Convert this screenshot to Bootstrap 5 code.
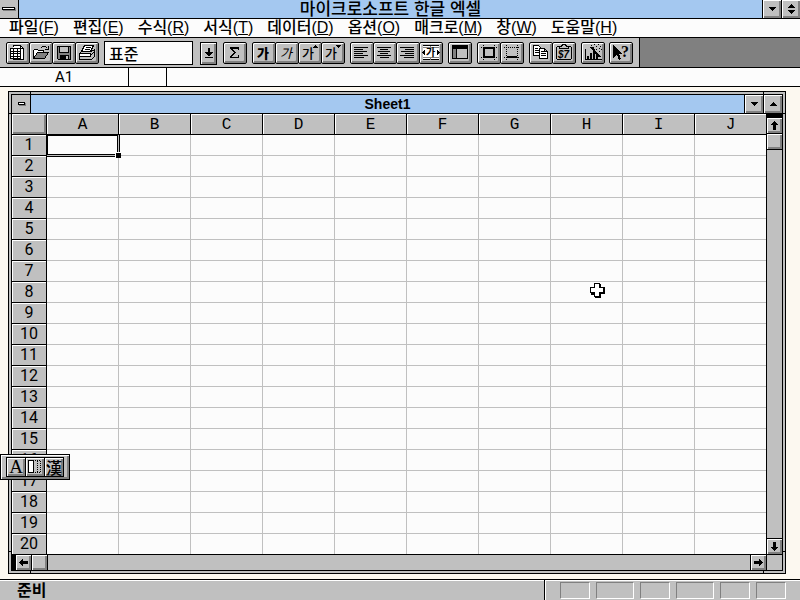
<!DOCTYPE html>
<html lang="ko">
<head>
<meta charset="utf-8">
<meta name="viewport" content="width=device-width, initial-scale=1">
<title>마이크로소프트 한글 엑셀</title>
<link href="https://cdn.jsdelivr.net/npm/bootstrap@5.3.0/dist/css/bootstrap.min.css" rel="stylesheet">
<style>
:root { --face:#c0c0c0; --shade:#808080; --caption:#a4c8f0; --paper:#fcfcfc; }
body { font-family:"Liberation Sans","Noto Sans CJK KR",sans-serif; font-size:16px; line-height:18px; color:#000; background:#fcf8f0; }
svg { display:block; shape-rendering:crispEdges; }
.face { background:var(--face); }
.bg-tray { background:var(--shade); }
.box-content { box-sizing:content-box; }
.raised { background:var(--face); border:0; padding:0; border-radius:0; color:#000; display:flex; align-items:center; justify-content:center; flex:none; box-shadow:inset 1px 1px #fff, inset -2px -2px var(--shade); }
.line-b { border-bottom:1px solid #000; }
.line-r { border-right:1px solid #000; }
.line-l { border-left:1px solid #000; }
.line-t { border-top:1px solid #000; }
.caption-bar { background:var(--caption); height:19px; }
.caption-text { font-size:17px; font-weight:500; line-height:20px; }
.sysbox { width:19px; height:18px; }
.menu-bar { background:var(--paper); height:19px; padding-left:9px; gap:14px; }
.menu-bar a { color:#000; text-decoration:none; font-weight:500; }
.tool-bar { height:30px; }
.tools { padding:4px 6px 0; gap:5px; }
.tool-btn { width:24px; height:22px; border:1px solid #000; border-radius:2px; }
.tool-btn + .tool-btn { margin-left:-1px; }
.style-box { width:89px; height:24px; margin-top:-1px; border:1px solid #000; background:var(--paper); padding:0 4px; font-weight:500; }
.style-arrow { width:17px; height:23px; border:1px solid #000; margin:0 1px 0 2px; }
.formula-bar { height:19px; background:var(--paper); }
.formula-bar input { border:0; background:transparent; padding:0; min-width:0; font-family:Roboto,sans-serif; font-size:15px; }
.name-box { width:128px; text-align:center; }
.gap-box { width:39px; }
.desk { padding:4px 14px 5px 8px; min-height:0; }
.doc-window { border:1px solid #000; padding:2px; background:var(--face); min-height:0; }
.doc-window::before, .doc-window::after { content:""; position:absolute; border:0 solid #000; }
.doc-window::before { top:0; bottom:0; left:21px; right:21px; border-width:0 1px; }
.doc-window::after { left:0; right:0; top:21px; bottom:21px; border-width:1px 0; }
.doc-inner { border:1px solid #000; z-index:1; background:var(--face); min-height:0; }
.doc-title { font-size:14px; font-weight:700; }
.doc-btn { width:19px; height:18px; }
.sheet-area { min-height:0; }
.grid-view { background:var(--paper); overflow:hidden; min-width:0; }
.cells { table-layout:fixed; width:calc(100% + 1px); border-collapse:separate; border-spacing:0; }
.cells th, .cells td { height:21px; padding:0; border:solid var(--face); border-width:0 1px 1px 0; }
.cells th { background:var(--face); border-color:#000; text-align:center; font-weight:400; font-family:Roboto,sans-serif; font-size:16px; line-height:20px; box-shadow:inset 1px 1px #fff; }
.cells thead th { font-family:"Liberation Mono",monospace; padding-top:2px; line-height:18px; }
.cells .row-head { width:35px; }
.cells .corner { box-shadow:inset 1px 1px #fff, inset -2px -2px var(--shade); }
.cursor-frame { position:absolute; top:-1px; left:-1px; right:-2px; bottom:-2px; border:2px solid #000; border-right:3px double #000; border-bottom:3px double #000; }
.cursor-frame::after { content:""; position:absolute; right:-4px; bottom:-4px; width:5px; height:5px; background:#000; box-shadow:-1px -1px #fff; }
.vscroll { width:16px; }
.vscroll .stop { height:4px; background:#000; }
.vscroll .raised { width:15px; height:15px; }
.hscroll { height:16px; }
.hscroll .stop { width:4px; background:#000; }
.hscroll .raised { width:15px; height:15px; }
.hscroll .size-box { width:16px; }
.status-bar { height:21px; }
.status-text { box-shadow:inset 0 1px #fff; padding-left:17px; font-weight:700; line-height:21px; }
.lamps { gap:6px; padding:2px 14px 1px 15px; box-shadow:inset 1px 1px #fff; }
.lamp { width:30px; height:17px; border:1px solid #fff; border-top-color:var(--shade); border-left-color:var(--shade); }
.lamp.wide { width:38px; }
.ime { top:454px; left:0; z-index:5; border:1px solid #000; padding:2px 5px; box-shadow:inset 1px 1px #fff, inset -2px -2px var(--shade); }
.ime-btn { width:20px; height:20px; border:1px solid #000; margin-left:-1px; font-family:"Liberation Serif",serif; font-size:19px; line-height:18px; }
.ime-btn:first-child { margin-left:0; }
.ime-btn.hanja { font-family:"Noto Sans CJK KR",sans-serif; font-size:16px; font-weight:500; }
.pointer { top:283px; left:590px; z-index:4; }
.ln { fill:none; stroke:#000; }
.ko { font-family:"Noto Sans CJK KR",sans-serif; font-size:13px; }
.ko.tiny { font-size:10px; }
</style>
</head>
<body class="vh-100 overflow-hidden d-flex flex-column">

<header class="caption-bar line-b d-flex">
  <button class="raised sysbox line-r shadow-none" aria-label="조절 메뉴"><svg width="18" height="18"><path fill="#808080" d="M3 8h13v3H3z"/><path d="M2 7h13v3H2z"/><path fill="#fff" d="M3 8h11v1H3z"/></svg></button>
  <div class="caption-text flex-grow-1 text-center">마이크로소프트 한글 엑셀</div>
  <button class="raised doc-btn line-l" aria-label="최소화"><svg width="15" height="16"><path d="M4 6h7v1h-1v1H9v1H8v1H7V9H6V8H5V7H4z"/></svg></button>
  <button class="raised doc-btn line-l" aria-label="복원"><svg width="15" height="16"><path d="M7 3h1v1h1v1h1v1h1v1H4V6h1V5h1V4h1zM4 9h7v1h-1v1H9v1H8v1H7v-1H6v-1H5v-1H4z"/></svg></button>
</header>

<nav class="menu-bar line-b d-flex">
  <a href="#">파일(<u>F</u>)</a><a href="#">편집(<u>E</u>)</a><a href="#">수식(<u>R</u>)</a><a href="#">서식(<u>T</u>)</a><a href="#">데이터(<u>D</u>)</a><a href="#">옵션(<u>O</u>)</a><a href="#">매크로(<u>M</u>)</a><a href="#">창(<u>W</u>)</a><a href="#">도움말(<u>H</u>)</a>
</nav>

<div class="tool-bar line-b d-flex">
  <div class="tools face line-r d-flex align-items-start">
    <div class="d-flex">
      <button class="raised tool-btn" aria-label="새 시트"><svg width="22" height="20" viewBox="0 0 22 20"><path fill="#fff" d="M6 2h7l4 4v11H6z"/><path class="ln" d="M6.500 4V2.500H13.500L16.500 5.500V16.500H6M13.500 2.500V5.500H16.500"/><path fill="#fff" d="M3 5h11v11H3z"/><path class="ln" d="M3.500 5.500h10v10h-10zM6.500 5v11M10.500 5v11M3 8.500h11M3 10.500h11M3 13.500h11"/></svg></button>
      <button class="raised tool-btn" aria-label="열기"><svg width="22" height="20" viewBox="0 0 22 20"><path fill="#fff" d="M3 7h4l1 1h6v8H3z"/><path class="ln" d="M3.500 16V7.500L4.500 6.500H7.500L8.500 7.500H13.500V9.500"/><path fill="#808080" stroke="#000" d="M3.500 15.500L7.500 9.500H18.500L14.500 15.500z"/><path class="ln" d="M10.500 5.500L12.500 3.500H15.500L17.500 5.500M18 3v4M15 6.500h3"/></svg></button>
      <button class="raised tool-btn" aria-label="저장"><svg width="22" height="20" viewBox="0 0 22 20"><path fill="#808080" stroke="#000" d="M4.500 3.500h13v13h-12l-1-1z"/><path fill="#c0c0c0" stroke="#000" d="M6.500 3.500h9v6h-9z"/><path d="M7 12h9v5H7z"/><path fill="#c0c0c0" d="M13 13h2v3h-2z"/></svg></button>
      <button class="raised tool-btn" aria-label="인쇄"><svg width="22" height="20" viewBox="0 0 22 20"><path fill="#fff" stroke="#000" d="M8.500 2.500h9L14.500 8.500H5.500z"/><path class="ln" d="M10 4.500h5M9 6.500h5"/><path fill="#c0c0c0" stroke="#000" d="M3.500 10.500L5.500 8.500H15.500L18.500 6.500V13.500L15.500 16.500H3.500z"/><path fill="#fff" stroke="#000" d="M3.500 10.500h11v3h-11z"/><path class="ln" d="M14.500 12.500l4-4"/></svg></button>
    </div>
    <input class="style-box" type="text" value="표준" aria-label="스타일">
    <button class="raised style-arrow" aria-label="스타일 목록"><svg width="15" height="21"><path d="M7 5h2v4h3v1h-1v1h-1v1H9v1H7v-1H6v-1H5v-1H4V9h3zM4 14h8v1H4z"/></svg></button>
    <button class="raised tool-btn" aria-label="자동 합계"><svg width="22" height="20" viewBox="0 0 22 20"><path d="M6 4h9v3h-1V5.500H8.500L12 9.500L8 14h6v-2h1v3H6v-1l4-4.500L6 5z"/></svg></button>
    <div class="d-flex">
      <button class="raised tool-btn" aria-label="굵게"><svg width="22" height="20"><text class="ko" x="4" y="15" font-weight="900">가</text></svg></button>
      <button class="raised tool-btn" aria-label="기울임"><svg width="22" height="20"><text class="ko" x="4" y="15" font-style="italic" font-weight="400">가</text></svg></button>
      <button class="raised tool-btn" aria-label="글꼴 크게"><svg width="22" height="20"><text class="ko" x="3" y="15" font-weight="500">가</text><path d="M16 2h1v1h1v1h1v1h-5V4h1V3h1z"/></svg></button>
      <button class="raised tool-btn" aria-label="글꼴 작게"><svg width="22" height="20"><text class="ko" x="3" y="15" font-weight="500">가</text><path d="M14 2h5v1h-1v1h-1v1h-1V4h-1V3h-1z"/></svg></button>
    </div>
    <div class="d-flex">
      <button class="raised tool-btn" aria-label="왼쪽 맞춤"><svg width="22" height="20"><path class="ln" d="M3 4.500h14M3 6.500h9M3 8.500h13M3 10.500h9M3 12.500h14M3 14.500h10"/></svg></button>
      <button class="raised tool-btn" aria-label="가운데 맞춤"><svg width="22" height="20"><path class="ln" d="M3 4.500h14M6 6.500h8M4 8.500h12M6 10.500h8M3 12.500h14M6 14.500h9"/></svg></button>
      <button class="raised tool-btn" aria-label="오른쪽 맞춤"><svg width="22" height="20"><path class="ln" d="M3 4.500h14M8 6.500h9M4 8.500h13M8 10.500h9M3 12.500h14M7 14.500h10"/></svg></button>
      <button class="raised tool-btn" aria-label="가운데 걸쳐 맞춤"><svg width="22" height="20"><path fill="#fff" d="M3 2h16v15H3z"/><path class="ln" d="M3 2.500h16M3 16.500h16"/><path stroke="#808080" d="M3 4.500h16M3 14.500h16M10.500 3v2M10.500 15v2"/><path d="M2 9h1V8h1V7h1v5H4v-1H3v-1H2zM20 9h-1V8h-1V7h-1v5h1v-1h1v-1h1z"/><text class="ko tiny" x="6" y="13" font-weight="700">가</text></svg></button>
    </div>
    <button class="raised tool-btn" aria-label="자동 서식"><svg width="22" height="20"><path fill="#c0c0c0" stroke="#000" d="M3.500 2.500h15v13h-15z"/><path d="M3 2h16v4H3z"/><path fill="#808080" d="M4 6h3v9H4z"/><path class="ln" d="M7.500 6v10"/></svg></button>
    <div class="d-flex">
      <button class="raised tool-btn" aria-label="윤곽 테두리"><svg width="22" height="20"><path class="ln" stroke-width="2" d="M6 5h10v9H6z"/><path class="ln" stroke-dasharray="1 1" d="M3 4.500h3M16 4.500h4M3 14.500h3M16 14.500h4M5.500 2v3M16.500 2v3M5.500 14v4M16.500 14v4"/></svg></button>
      <button class="raised tool-btn" aria-label="아래쪽 테두리"><svg width="22" height="20"><path class="ln" stroke-dasharray="1 1" d="M3 4.500h16M5.500 2v16M16.500 2v16M3 14.500h16"/><path d="M6 13h10v2H6z"/></svg></button>
    </div>
    <div class="d-flex">
      <button class="raised tool-btn" aria-label="복사"><svg width="22" height="20"><path fill="#fff" stroke="#000" d="M3.500 2.500h5l3 3v7h-8z"/><path class="ln" d="M5 5.500h3M5 7.500h4M5 9.500h4"/><path fill="#fff" stroke="#000" d="M9.500 5.500h5l3 3v7h-8zM14.500 5.500v3h3"/><path class="ln" d="M11 8.500h3M11 10.500h5M11 12.500h5"/></svg></button>
      <button class="raised tool-btn" aria-label="서식 붙여넣기"><svg width="22" height="20"><path class="ln" d="M4.500 3.500h13l1 1v11l-1 1h-13l-1-1v-11z"/><path fill="#c0c0c0" stroke="#000" d="M6.500 5.500v-2h2l1-2h3l1 2h2v2z"/><text x="5" y="15" font-size="10" font-weight="700" font-style="italic">$7</text></svg></button>
    </div>
    <button class="raised tool-btn" aria-label="차트 마법사"><svg width="22" height="20"><path class="ln" d="M3.500 6v10.500h16"/><path d="M5 13h2v4H5zM8 10h2v7H8zM11 8h2v9h-2zM14 12h2v5h-2z"/><path class="ln" stroke-width="2" d="M9 4l9 10"/><path d="M9 2h1v1H9zM12 1h1v1h-1zM14 3h1v1h-1zM16 1h1v1h-1zM18 3h1v1h-1zM17 5h1v1h-1zM19 6h1v1h-1zM14 6h1v1h-1zM17 8h1v1h-1zM11 4h1v1h-1z"/></svg></button>
    <button class="raised tool-btn" aria-label="도움말"><svg width="22" height="20"><path d="M3 2l9 9H9l2 5-2 1-2-5-4 3z"/><text x="11" y="14" font-family="Liberation Serif" font-size="16" font-weight="700">?</text></svg></button>
  </div>
  <div class="flex-grow-1 bg-tray"></div>
</div>

<div class="formula-bar line-b d-flex">
  <input class="name-box" type="text" value="A1" aria-label="이름 상자">
  <div class="gap-box line-l line-r"></div>
  <input class="flex-grow-1" type="text" aria-label="수식 입력">
</div>

<main class="desk flex-grow-1 d-flex">
  <section class="doc-window position-relative flex-grow-1 d-flex flex-column">
    <div class="doc-inner position-relative flex-grow-1 d-flex flex-column">
      <div class="caption-bar line-b d-flex">
        <button class="raised sysbox line-r shadow-none" aria-label="문서 조절 메뉴"><svg width="18" height="18"><path fill="#808080" d="M7 8h7v3H7z"/><path d="M6 7h7v3H6z"/><path fill="#fff" d="M7 8h5v1H7z"/></svg></button>
        <div class="doc-title flex-grow-1 text-center">Sheet1</div>
        <button class="raised doc-btn line-l" aria-label="문서 최소화"><svg width="15" height="16"><path d="M4 6h7v1h-1v1H9v1H8v1H7V9H6V8H5V7H4z"/></svg></button>
        <button class="raised doc-btn line-l" aria-label="문서 최대화"><svg width="15" height="16"><path d="M7 6h1v1h1v1h1v1h1v1H4V9h1V8h1V7h1z"/></svg></button>
      </div>
      <div class="sheet-area flex-grow-1 d-flex">
        <div class="grid-view flex-grow-1">
          <table class="cells">
            <thead><tr id="heads"><th class="row-head corner"></th></tr></thead>
            <tbody id="rows"></tbody>
          </table>
        </div>
        <div class="vscroll face line-l d-flex flex-column">
          <div class="stop"></div>
          <button class="raised line-b box-content" aria-label="위로"><svg width="15" height="15"><path d="M7 3h1v1h1v1h1v1h1v1H9v5H6V7H4V6h1V5h1V4h1z"/></svg></button>
          <div class="raised line-b box-content"></div>
          <div class="flex-grow-1"></div>
          <button class="raised line-t box-content" aria-label="아래로"><svg width="15" height="15"><path d="M6 3h3v5h2v1h-1v1H9v1H8v1H7v-1H6v-1H5V9H4V8h2z"/></svg></button>
        </div>
      </div>
      <div class="hscroll line-t d-flex">
        <div class="stop"></div>
        <button class="raised line-r box-content" aria-label="왼쪽으로"><svg width="15" height="15"><path d="M3 7h1V6h1V5h1V4h1v2h5v3H7v2H6v-1H5V9H4V8H3z"/></svg></button>
        <div class="raised line-r box-content"></div>
        <div class="flex-grow-1"></div>
        <button class="raised line-l box-content" aria-label="오른쪽으로"><svg width="15" height="15"><path d="M12 7h-1V6h-1V5H9V4H8v2H3v3h5v2h1v-1h1V9h1V8h1z"/></svg></button>
        <div class="size-box line-l"></div>
      </div>
    </div>
  </section>
</main>

<footer class="status-bar face line-t d-flex">
  <div class="status-text flex-grow-1 line-r">준비</div>
  <div class="lamps d-flex">
    <div class="lamp"></div><div class="lamp wide"></div><div class="lamp"></div><div class="lamp wide"></div><div class="lamp"></div><div class="lamp"></div>
  </div>
</footer>

<div class="ime face position-absolute d-flex">
  <button class="raised ime-btn">A</button>
  <button class="raised ime-btn" aria-label="전자/반자"><svg width="18" height="18"><path fill="#fff" stroke="#000" d="M2.500 2.500h5v12h-5z"/><path class="ln" stroke-dasharray="1 1" d="M9 2.500h6M9 14.500h6M11.500 3v12M14.500 3v12"/></svg></button>
  <button class="raised ime-btn hanja">漢</button>
</div>
<svg class="pointer position-absolute pe-none" width="16" height="16"><path d="M5 1h6v3h4v7h-4v4H5v-3H1V5h4z"/><path fill="#fff" stroke="#000" d="M4.500 .500h5v4h4v5h-4v4h-5v-4h-4v-5h4z"/></svg>

<script>
const heads = document.getElementById('heads');
for (const c of 'ABCDEFGHIJ') heads.insertAdjacentHTML('beforeend', `<th scope="col">${c}</th>`);
const rows = document.getElementById('rows');
for (let r = 1; r <= 20; r++) {
  const first = r === 1 ? '<td class="position-relative"><div class="cursor-frame"></div></td>' : '<td></td>';
  rows.insertAdjacentHTML('beforeend', `<tr><th scope="row">${r}</th>${first}${'<td></td>'.repeat(9)}</tr>`);
}
</script>
<script src="https://cdn.jsdelivr.net/npm/bootstrap@5.3.0/dist/js/bootstrap.bundle.min.js"></script>
</body>
</html>
